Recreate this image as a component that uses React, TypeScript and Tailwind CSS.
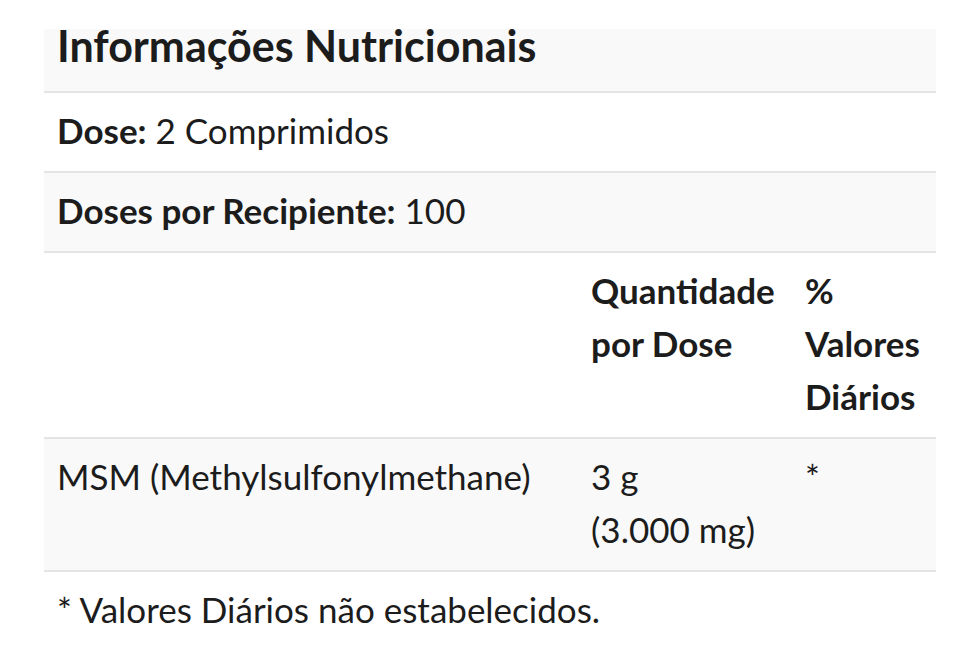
import React from "react";

export default function App() {
  const cell = "px-[13px] pt-[11px] pb-[14px] align-top leading-[53px]";
  return (
    <div className="min-h-[654px] w-[980px] bg-white pt-[29px] text-[#1c1c1c]" style={{ fontFamily: "Lato, 'Open Sans', sans-serif" }}>
      <div className="ml-[44px] w-[892px] text-[35px]">
        <table className="w-full border-collapse table-fixed">
          <colgroup>
            <col className="w-[534px]" />
            <col className="w-[214px]" />
            <col className="w-[144px]" />
          </colgroup>
          <tbody>
            <tr className="bg-[#f9f9f9] border-b-2 border-[#e4e4e4]">
              <td colSpan={3} className="h-[62px] px-[13px] pt-0 pb-[29px] align-top text-[43px] font-bold leading-[33px]">
                Informações Nutricionais
              </td>
            </tr>
            <tr className="border-b-2 border-[#e4e4e4]">
              <td colSpan={3} className={cell}>
                <span className="font-bold">Dose:</span> 2 Comprimidos
              </td>
            </tr>
            <tr className="bg-[#f9f9f9] border-b-2 border-[#e4e4e4]">
              <td colSpan={3} className={cell}>
                <span className="font-bold">Doses por Recipiente:</span> 100
              </td>
            </tr>
            <tr className="border-b-2 border-[#e4e4e4]">
              <td className={cell}></td>
              <td className={cell + " font-bold"}>Quantidade por Dose</td>
              <td className={cell + " font-bold"}>% Valores Diários</td>
            </tr>
            <tr className="bg-[#f9f9f9] border-b-2 border-[#e4e4e4]">
              <td className={cell}>MSM (Methylsulfonylmethane)</td>
              <td className={cell}>3 g (3.000{"\u00a0"}mg)</td>
              <td className={cell}>*</td>
            </tr>
          </tbody>
        </table>
        <p className="px-[13px] pt-[11px] leading-[53px]">* Valores Diários não estabelecidos.</p>
      </div>
    </div>
  );
}
